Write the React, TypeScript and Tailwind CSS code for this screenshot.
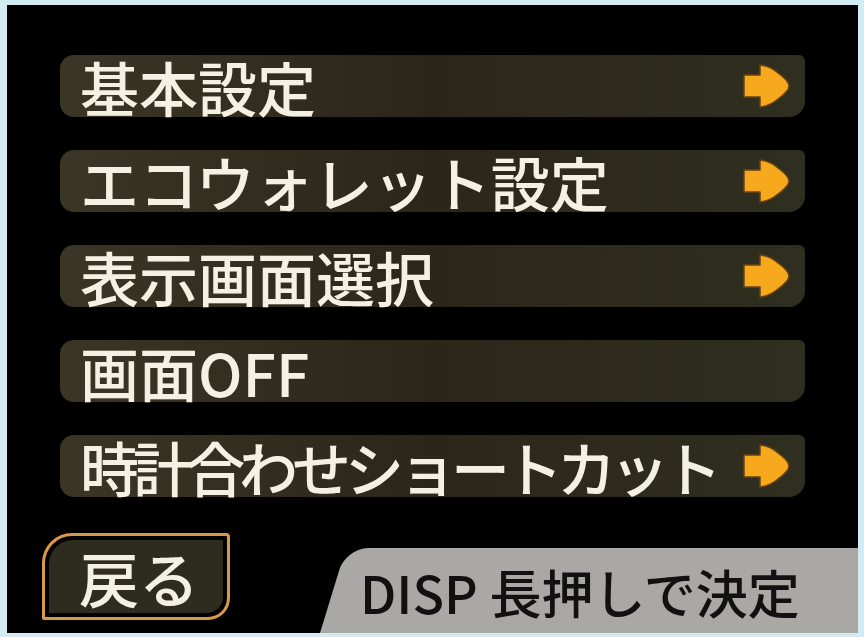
import React from "react";

const font = { fontFamily: '"Noto Sans CJK JP", "Noto Sans", sans-serif' };

function Arrow() {
  return (
    <svg width="48" height="46" viewBox="0 0 48 46" className="shrink-0">
      <path
        d="M1 12 H17 V2 Q27 3 35 10 Q46 18 46 23 Q46 28 35 36 Q27 43 17 44 V34 H1 Z"
        fill="#f7a91d"
        stroke="#6e4210"
        strokeWidth="1.5"
        strokeLinejoin="round"
      />
    </svg>
  );
}

function Row({ label, arrow = true, tight = false }: { label: string; arrow?: boolean; tight?: boolean }) {
  return (
    <div className="h-[62px] flex items-center rounded-l-[14px] rounded-tr-[6px] rounded-br-[16px] bg-gradient-to-r from-[#3a3524] via-[#2c2619] to-[#2f2f1f] pl-[20px] pr-[14px]">
      <span
        className={
          "text-[59px] leading-none font-medium text-[#f4f1e2] whitespace-nowrap " +
          (tight ? "tracking-[-6px]" : "tracking-[0px]")
        }
        style={font}
      >
        {label}
      </span>
      <div className="flex-1" />
      {arrow && <Arrow />}
    </div>
  );
}

export default function App() {
  return (
    <div className="w-[864px] h-[637px] bg-[#d3ebf3] pt-[5px] pl-[7px] pr-[6px] pb-[4px]">
      <div className="w-full h-full bg-black flex flex-col overflow-hidden relative">
        <div className="flex flex-col gap-[33px] pt-[50px] pl-[53px] pr-[53px]">
          <Row label="基本設定" />
          <Row label="エコウォレット設定" />
          <Row label="表示画面選択" />
          <Row label="画面OFF" arrow={false} />
          <Row label="時計合わせショートカット" tight />
        </div>
        <div className="flex-1 flex items-end">
          <div className="ml-[35px] mb-[13px] w-[188px] h-[87px] border-[3px] border-[#d89a48] rounded-tl-[30px] rounded-tr-[4px] rounded-br-[22px] rounded-bl-[2px] p-[4px]">
            <div className="w-full h-full bg-[#2e2b1f] rounded-tl-[24px] rounded-br-[16px] flex items-center pl-[30px]">
              <span className="text-[60px] leading-none font-medium text-[#f4f1e2]" style={font}>
                戻る
              </span>
            </div>
          </div>
          <div className="ml-[90px] flex-1 h-[85px] relative">
            <div className="absolute left-0 bottom-0 top-0 right-[-40px] bg-[#a9a8a4] rounded-tl-[22px] origin-bottom-left skew-x-[-17deg]" />
            <div className="relative h-full flex items-center pl-[40px] pt-[2px]">
              <span className="text-[52px] leading-none font-medium text-[#111111] whitespace-nowrap tracking-[0px]" style={font}>
                DISP 長押しで決定
              </span>
            </div>
          </div>
        </div>
      </div>
    </div>
  );
}
